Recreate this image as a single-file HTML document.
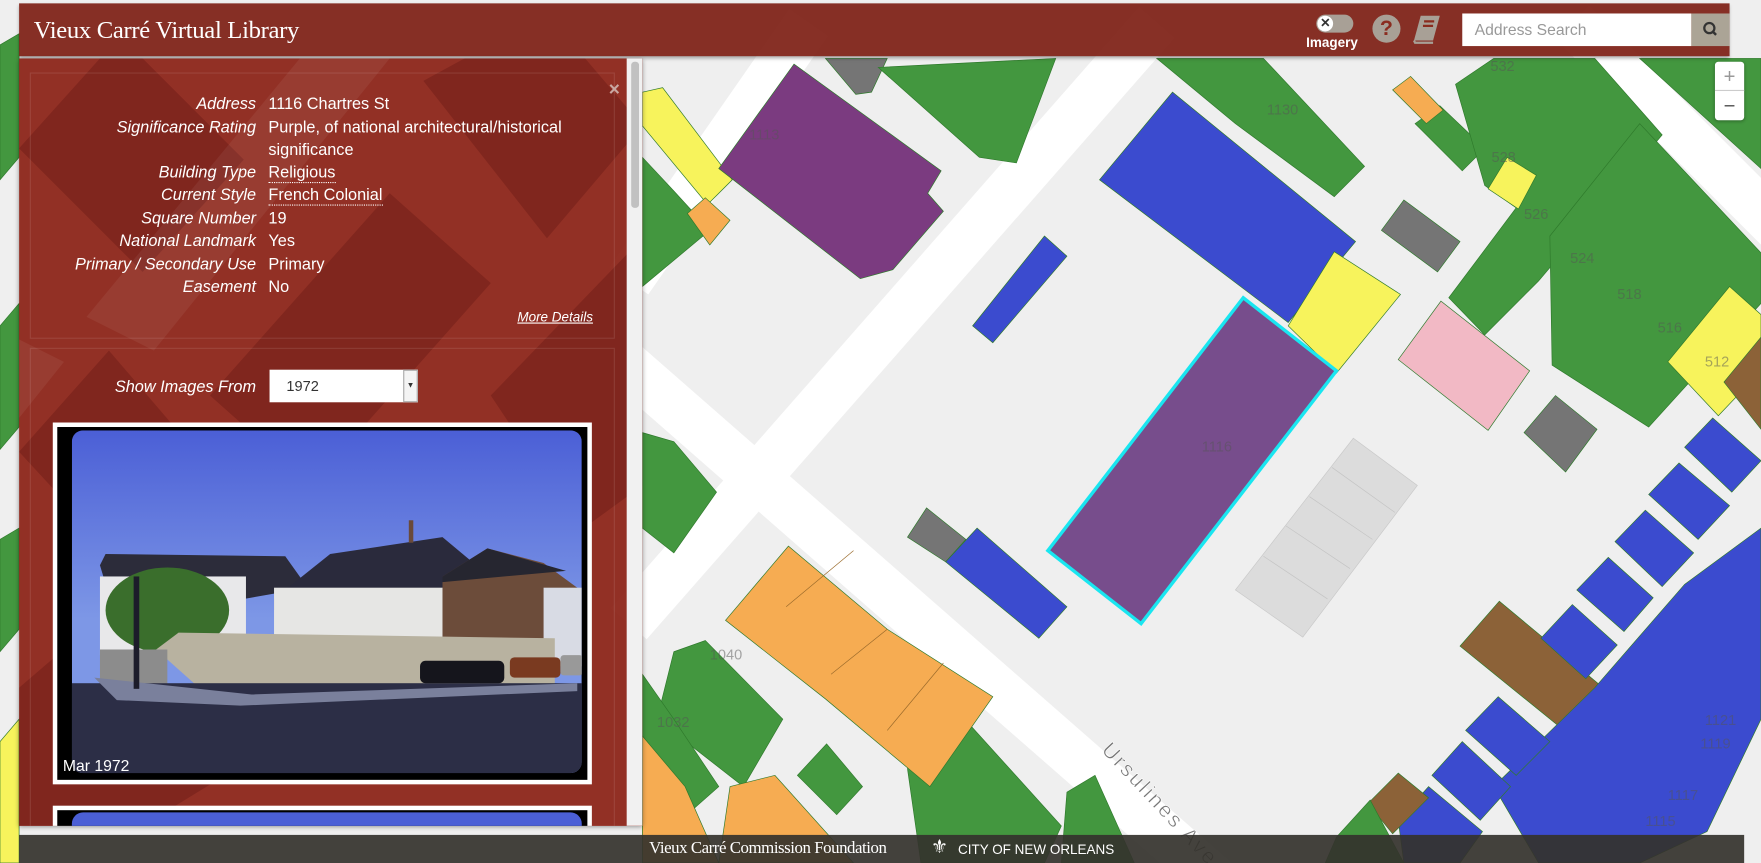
<!DOCTYPE html>
<html><head><meta charset="utf-8"><style>
html,body{margin:0;padding:0;width:1761px;height:863px;overflow:hidden;background:#efefef}
.s{position:absolute;left:0;top:0;width:1568px;height:768px;transform:scale(1.12309,1.1237);transform-origin:0 0;font-family:"Liberation Sans",sans-serif}
.hdr{position:absolute;left:17px;top:3px;width:1523px;height:47px;background:rgba(122,26,14,.9);box-shadow:0 2px 3px rgba(0,0,0,.3)}
.title{position:absolute;left:13px;top:11px;font-family:"Liberation Serif",serif;font-size:22px;color:#fff;letter-spacing:-.3px}
.panel{position:absolute;left:17px;top:52px;width:555px;height:683px;background:rgba(140,36,24,.94);overflow:hidden;box-shadow:0 1px 4px rgba(0,0,0,.4)}
.row{position:absolute;left:0;width:520px;font-size:14.5px;color:#fff;line-height:20px}
.row .l{position:absolute;right:309px;font-style:italic;white-space:nowrap}
.row .v{position:absolute;left:222px;width:290px}
.u{border-bottom:1px dotted #fff}
</style></head><body><div class="s">
<svg width="1568" height="768" style="position:absolute;left:0;top:0">
<rect width="1568" height="768" fill="#efefef"/>
<g stroke="#fff" stroke-width="42" fill="none">
<line x1="560" y1="555" x2="1030" y2="20"/>
<line x1="530" y1="300" x2="1090" y2="790"/>
<line x1="1400" y1="20" x2="1600" y2="220"/>
<line x1="720" y1="20" x2="560" y2="250"/>
</g>
<g stroke="#2f7a2c" stroke-width=".6">
<polygon fill="#43973f" points="0,40,17,30,17,140,0,160"/>
<polygon fill="#43973f" points="0,290,17,270,17,380,0,400"/>
<polygon fill="#43973f" points="0,480,17,470,17,560,0,580"/>
<polygon fill="#f7f35c" points="0,660,17,640,17,768,0,768"/>
<polygon fill="#f7f35c" points="572,82,590,78,652,160,630,182,572,112"/>
<polygon fill="#43973f" points="572,140,600,170,632,205,572,255"/>
<polygon fill="#f6ac52" points="612,190,628,176,650,196,632,218"/>
<polygon fill="#43973f" points="572,385,600,393,638,438,600,492,572,470"/>
<polygon fill="#43973f" points="600,580,628,570,697,640,662,700,585,640"/>
<polygon fill="#43973f" points="572,600,600,640,640,700,572,760"/>
<polygon fill="#f6ac52" points="572,655,610,700,640,768,572,768"/>
<polygon fill="#f6ac52" points="650,700,690,690,760,768,640,768"/>
<polygon fill="#43973f" points="710,690,736,662,768,700,745,725"/>
<polygon fill="#43973f" points="808,684,850,630,945,735,930,768,820,768"/>
<polygon fill="#43973f" points="950,705,975,690,1010,768,945,768"/>
<polygon fill="#f6ac52" points="646,552,702,486,790,560,884,620,828,700,735,622"/>
<polyline fill="none" stroke="#9a6a2a" points="700,540,760,490"/>
<polyline fill="none" stroke="#9a6a2a" points="740,600,790,560"/>
<polyline fill="none" stroke="#9a6a2a" points="790,650,840,590"/>
<polygon fill="#757575" points="735,52,790,52,776,82,762,84"/>
<polygon fill="#43973f" points="782,60,940,52,905,145,872,140"/>
<polygon fill="#7b3b80" points="640,150,707,57,838,152,826,172,840,188,795,240,766,248"/>
<polygon fill="#3b4bcf" points="866,290,930,210,950,228,884,305"/>
<polygon fill="#3b4bcf" points="979,160,1044,82,1207,215,1147,287"/>
<polygon fill="#f7f35c" points="1147,290,1188,224,1247,262,1190,332"/>
<polygon fill="#43973f" points="1030,52,1125,52,1215,148,1188,175,1100,110"/>
<polygon fill="#43973f" points="1260,110,1282,94,1322,132,1302,152"/>
<polygon fill="#f6ac52" points="1240,80,1256,68,1285,98,1270,110"/>
<polygon fill="#757575" points="1230,205,1250,178,1300,215,1280,242"/>
<polygon fill="#f2b9c5" points="1245,320,1283,268,1362,330,1325,383"/>
<polygon fill="#757575" points="1357,385,1385,352,1422,382,1394,420"/>
<polygon fill="#43973f" points="1296,75,1330,52,1420,52,1480,120,1370,250,1322,298,1290,265,1350,185,1322,165"/>
<polygon fill="#43973f" points="1380,210,1460,110,1568,225,1568,270,1468,380,1382,325"/>
<polygon fill="#43973f" points="1460,52,1568,52,1568,150"/>
<polygon fill="#f7f35c" points="1325,168,1342,140,1368,156,1352,186"/>
<polygon fill="#f7f35c" points="1485,322,1540,255,1568,280,1568,330,1530,370"/>
<polygon fill="#8c6238" points="1535,340,1568,300,1568,382"/>
<polygon fill="#dcdcdc" stroke="#c9c9c9" points="1100,525,1205,390,1262,432,1160,567"/>
<polyline fill="none" stroke="#c4c4c4" points="1125,495,1182,533"/><polyline fill="none" stroke="#c4c4c4" points="1145,468,1202,506"/><polyline fill="none" stroke="#c4c4c4" points="1166,442,1222,480"/><polyline fill="none" stroke="#c4c4c4" points="1186,416,1242,456"/>
<polygon fill="#757575" points="808,478,825,452,860,480,842,500"/>
<polygon fill="#3b4bcf" points="842,500,870,470,950,540,925,568"/>
<polygon fill="#774d8c" stroke="#19e6f0" stroke-width="3" points="933,490,1107,265,1190,330,1016,555"/>
<polygon fill="#8c6238" points="1300,575,1335,535,1437,620,1405,660"/>
<polygon fill="#3b4bcf" points="1420,612,1500,520,1568,470,1568,640,1520,740,1460,768,1370,768,1330,700"/>
<polygon fill="#3b4bcf" points="1500,398,1525,372,1568,410,1542,438"/>
<polygon fill="#3b4bcf" points="1468,440,1495,412,1540,450,1512,480"/>
<polygon fill="#3b4bcf" points="1438,482,1465,454,1508,492,1480,522"/>
<polygon fill="#3b4bcf" points="1404,525,1432,496,1472,532,1446,562"/>
<polygon fill="#3b4bcf" points="1372,568,1400,538,1440,574,1412,604"/>
<polygon fill="#3b4bcf" points="1305,650,1334,620,1380,660,1350,690"/>
<polygon fill="#3b4bcf" points="1275,690,1302,660,1345,700,1318,730"/>
<polygon fill="#3b4bcf" points="1245,730,1272,700,1320,740,1300,768,1250,768"/>
<polygon fill="#8c6238" points="1218,715,1245,688,1272,710,1240,742"/>
<polygon fill="#43973f" points="1190,745,1220,712,1250,768,1180,768"/>
</g>
<g fill="#555" fill-opacity=".5" font-size="13" font-family="Liberation Sans,sans-serif">
<text x="667" y="124">1113</text><text x="1070" y="402">1116</text><text x="1128" y="102">1130</text>
<text x="1327" y="63">532</text><text x="1328" y="144">528</text><text x="1357" y="195">526</text>
<text x="1398" y="234">524</text><text x="1440" y="266">518</text><text x="1476" y="296">516</text>
<text x="1518" y="326">512</text><text x="632" y="587">1040</text><text x="585" y="647">1032</text>
<text x="1518" y="645">1121</text><text x="1514" y="666">1119</text><text x="1485" y="712">1117</text><text x="1465" y="735">1115</text>
</g>
<text x="980" y="668" transform="rotate(47 980 668)" font-size="19" fill="#777" stroke="#fff" stroke-width=".5" letter-spacing="2" font-family="Liberation Sans,sans-serif">Ursulines Ave</text>
</svg>

<div style="position:absolute;left:1527px;top:55px;width:26px;height:52px;background:#fff;border-radius:3px;box-shadow:0 1px 3px rgba(0,0,0,.3);color:#999;font-size:18px;text-align:center;line-height:26px"><div style="border-bottom:1px solid #ccc;height:25px">+</div><div style="color:#555">−</div></div>

<div class="hdr">
<div class="title">Vieux Carré Virtual Library</div>
<div style="position:absolute;left:1155px;top:10px;width:33px;height:16px;border-radius:8px;background:#a8a096"><div style="position:absolute;left:1px;top:1px;width:14px;height:14px;border-radius:7px;background:#fff;color:#333;font-size:11px;line-height:14px;text-align:center;font-weight:bold">✕</div></div>
<div style="position:absolute;left:1146px;top:28px;color:#fff;font-weight:bold;font-size:12px">Imagery</div>
<div style="position:absolute;left:1205px;top:10px;width:25px;height:25px;border-radius:13px;background:#a8a096;color:#8a2c1f;font-weight:bold;font-size:19px;line-height:25px;text-align:center">?</div>
<svg style="position:absolute;left:1240px;top:9px" width="28" height="28" viewBox="0 0 28 28"><path d="M8 2h17l-6 22H2z" fill="#a8a096"/><path d="M2 24l1 2h16" stroke="#a8a096" stroke-width="2" fill="none"/><path d="M11 7h9M10 11h9" stroke="#8a2c1f" stroke-width="2"/></svg>
<div style="position:absolute;left:1285px;top:9px;width:204px;height:29px;background:#fff;color:#999;font-size:14px;line-height:29px;padding-left:11px;box-sizing:border-box">Address Search</div>
<div style="position:absolute;left:1489px;top:9px;width:34px;height:29px;background:#aba496"><svg width="34" height="29"><circle cx="16" cy="13" r="4.5" stroke="#333" stroke-width="2" fill="none"/><line x1="19" y1="16" x2="22" y2="19" stroke="#333" stroke-width="2.2"/></svg></div>
</div>

<div class="panel">
<svg width="555" height="683" style="position:absolute;left:0;top:0">
<g fill="#5e1410" fill-opacity=".35">
<polygon points="0,80,90,-20,200,90,110,190"/>
<polygon points="170,300,330,120,420,200,260,380"/>
<polygon points="360,20,470,-40,555,60,470,160"/>
<polygon points="0,350,80,260,200,400,120,480"/>
<polygon points="220,480,340,360,460,480,350,600"/>
<polygon points="420,300,555,160,555,380,500,420"/>
<polygon points="0,560,70,500,180,640,110,683,0,683"/>
</g>
<g fill="#fff" fill-opacity=".06"><polygon points="250,0,330,0,120,260,60,230"/><polygon points="0,250,40,270,0,320"/></g>
<rect x="10" y="13" width="520" height="236" fill="none" stroke="#fff" stroke-opacity=".1"/>
<rect x="10" y="258" width="520" height="430" fill="none" stroke="#fff" stroke-opacity=".1"/>
<rect x="541" y="0" width="14" height="683" fill="#f1f1f1"/>
<rect x="545" y="3" width="7" height="130" rx="3" fill="#c1c1c1"/>
</svg>
<div style="position:absolute;left:525px;top:18px;color:#c9a8a2;font-size:17px;font-weight:bold">×</div>
<div class="row" style="top:31px"><span class="l">Address</span><span class="v">1116 Chartres St</span></div>
<div class="row" style="top:52px"><span class="l">Significance Rating</span><span class="v">Purple, of national architectural/historical significance</span></div>
<div class="row" style="top:92px"><span class="l">Building Type</span><span class="v"><span class="u">Religious</span></span></div>
<div class="row" style="top:112px"><span class="l">Current Style</span><span class="v"><span class="u">French Colonial</span></span></div>
<div class="row" style="top:133px"><span class="l">Square Number</span><span class="v">19</span></div>
<div class="row" style="top:153px"><span class="l">National Landmark</span><span class="v">Yes</span></div>
<div class="row" style="top:174px"><span class="l">Primary / Secondary Use</span><span class="v">Primary</span></div>
<div class="row" style="top:194px"><span class="l">Easement</span><span class="v">No</span></div>
<div style="position:absolute;right:44px;top:223px;color:#fff;font-size:12px;font-style:italic;text-decoration:underline">More Details</div>
<div class="row" style="top:283px"><span class="l">Show Images From</span></div>
<div style="position:absolute;left:223px;top:277px;width:132px;height:29px;background:#fff;font-size:13px;line-height:29px;color:#333;padding-left:15px;box-sizing:border-box">1972<div style="position:absolute;right:0;top:0;width:11px;height:27px;border:1px solid #aaa;background:#f4f4f4;font-size:7px;text-align:center;line-height:27px">▼</div></div>
<div style="position:absolute;left:30px;top:324px;width:480px;height:322px;background:#fff">
<div style="position:absolute;left:4px;top:4px;width:472px;height:314px;background:#000"></div>
<svg width="454" height="305" style="position:absolute;left:17px;top:7px"><defs><linearGradient id="sk" x1="0" y1="0" x2="0" y2="1"><stop offset="0" stop-color="#4b5fd6"/><stop offset=".55" stop-color="#7d97e6"/></linearGradient><clipPath id="cp"><rect width="454" height="305" rx="10"/></clipPath></defs>
<g clip-path="url(#cp)">
<rect width="454" height="305" fill="url(#sk)"/>
<polygon points="25,120 30,110 190,112 210,140 40,170" fill="#2c2c3a"/>
<rect x="25" y="130" width="130" height="70" fill="#e8e8ea"/>
<polygon points="180,150 230,110 330,95 360,120 340,140 180,160" fill="#2a2a3c"/>
<rect x="180" y="140" width="200" height="65" fill="#e6e6e4"/>
<rect x="300" y="80" width="4" height="20" fill="#6a4a3a"/>
<polygon points="330,130 370,105 420,118 450,140 450,210 330,210" fill="#6c4c3a"/>
<polygon points="330,130 370,105 440,125 330,135" fill="#262630"/>
<rect x="420" y="140" width="34" height="70" fill="#d8dbe4"/>
<ellipse cx="85" cy="160" rx="55" ry="38" fill="#3a6e2c"/>
<polygon points="75,195 95,180 430,185 430,235 120,235" fill="#b8b2a0"/>
<rect x="25" y="195" width="60" height="35" fill="#8c8c8c"/>
<rect x="0" y="225" width="454" height="80" fill="#2c2e46"/>
<polygon points="20,220 160,235 450,225 450,232 150,245 40,240" fill="#7a809c"/>
<rect x="310" y="205" width="75" height="20" rx="5" fill="#15151c"/>
<rect x="390" y="202" width="45" height="18" rx="4" fill="#7a3a20"/>
<rect x="435" y="200" width="20" height="18" rx="3" fill="#999"/>
<rect x="55" y="130" width="5" height="100" fill="#1c1c2a"/>
</g></svg>
<div style="position:absolute;left:9px;top:297px;color:#fff;font-size:14px">Mar 1972</div>
</div>
<div style="position:absolute;left:30px;top:665px;width:480px;height:40px;background:#fff"><div style="position:absolute;left:4px;top:4px;width:472px;height:40px;background:#000"></div><div style="position:absolute;left:17px;top:6px;width:454px;height:40px;background:#4b5fd6;border-radius:10px 10px 0 0"></div></div>
</div>

<div style="position:absolute;left:17px;top:743px;width:1536px;height:25px;background:rgba(52,50,44,.92);color:#fff">
<div style="position:absolute;left:561px;top:4px;font-family:'Liberation Serif',serif;font-size:15px;letter-spacing:-.4px">Vieux Carré Commission Foundation</div>
<div style="position:absolute;left:812px;top:1px;font-size:17px">⚜</div>
<div style="position:absolute;left:836px;top:6px;font-size:12px">CITY OF NEW ORLEANS</div>
</div>
</div></body></html>
